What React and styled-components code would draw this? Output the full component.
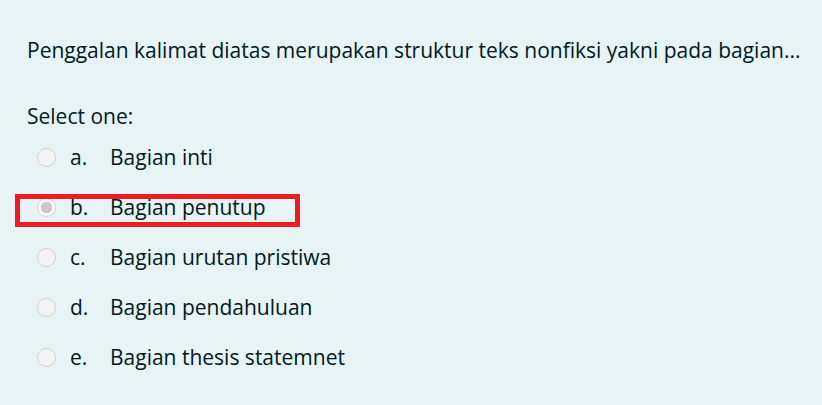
import styled, { createGlobalStyle } from 'styled-components';

const GlobalStyle = createGlobalStyle`
  html, body {
    margin: 0;
    padding: 0;
    background: #e7f3f5;
  }
  body {
    font-family: "Open Sans", "Noto Sans", "Liberation Sans", sans-serif;
    color: #001a1e;
  }
`;

const options = [
  { letter: 'a.', text: 'Bagian inti' },
  { letter: 'b.', text: 'Bagian penutup', checked: true },
  { letter: 'c.', text: 'Bagian urutan pristiwa' },
  { letter: 'd.', text: 'Bagian pendahuluan' },
  { letter: 'e.', text: 'Bagian thesis statemnet' },
];

export default function App() {
  return (
    <>
      <GlobalStyle />
      <Question>
        <QText>Penggalan kalimat diatas merupakan struktur teks nonfiksi yakni pada bagian...</QText>
        <Prompt>Select one:</Prompt>
        <Answers>
          {options.map((o) => (
            <Option key={o.letter}>
              <Radio checked={o.checked} />
              <Letter>{o.letter}</Letter>
              <Label>{o.text}</Label>
              {o.checked && <Highlight />}
            </Option>
          ))}
        </Answers>
      </Question>
    </>
  );
}

const Question = styled.div`
  padding: 34px 0 0 27px;
  height: 405px;
  box-sizing: border-box;
`;

const QText = styled.p`
  margin: 0;
  font-size: 21px;
  line-height: 32px;
  white-space: nowrap;
`;

const Prompt = styled.div`
  margin-top: 34px;
  font-size: 21px;
  line-height: 32px;
`;

const Answers = styled.div`
  display: flex;
  flex-direction: column;
`;

const Option = styled.div`
  position: relative;
  display: flex;
  align-items: center;
  height: 50px;
  padding-left: 10px;
  font-size: 21px;
`;

const Radio = styled.span`
  width: 19px;
  height: 19px;
  border-radius: 50%;
  border: 1px solid #d2d2d2;
  background: ${(p) =>
    p.checked
      ? 'radial-gradient(circle, #c9c9c9 0 5.5px, #fafafa 6px)'
      : '#f4f4f4'};
  box-sizing: border-box;
  flex-shrink: 0;
`;

const Letter = styled.span`
  margin-left: 14px;
  width: 40px;
`;

const Label = styled.span``;

const Highlight = styled.span`
  position: absolute;
  left: -12px;
  top: 12px;
  width: 285px;
  height: 33px;
  border: 5px solid #ec1c24;
  box-sizing: border-box;
`;
